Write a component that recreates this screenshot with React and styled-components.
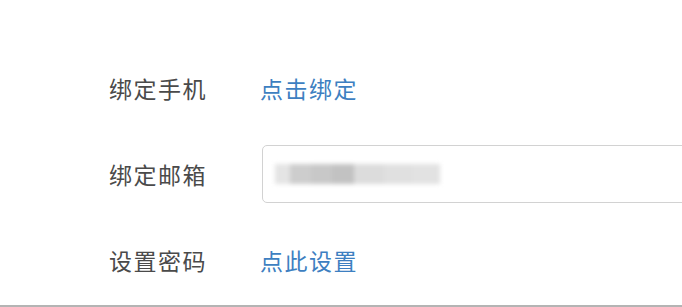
import React from "react";
import styled, { createGlobalStyle } from "styled-components";

const GlobalStyle = createGlobalStyle`
  html, body {
    margin: 0;
    padding: 0;
    background: #fff;
    overflow: hidden;
  }
  body {
    font-family: "Noto Sans CJK SC", "Noto Sans", sans-serif;
  }
`;

const rows = [
  { label: "绑定手机", link: "点击绑定" },
  { label: "绑定邮箱", input: true },
  { label: "设置密码", link: "点此设置" },
];

// pixelated email, blurred out like the screenshot
const blocks = [
  { w: 15, c: "#e4e4e4" },
  { w: 21, c: "#cdcdcd" },
  { w: 21, c: "#c8c8c8" },
  { w: 22, c: "#c2c2c2" },
  { w: 30, c: "#dcdcdc" },
  { w: 28, c: "#e0e0e0" },
  { w: 28, c: "#e2e2e2" },
];

const App = () => {
  return (
    <Page>
      <GlobalStyle />
      {rows.map((r) => (
        <Row key={r.label}>
          <Label>{r.label}</Label>
          {r.input ? (
            <InputBox>
              <Blur>
                {blocks.map((b, i) => (
                  <Pixel key={i} style={{ width: b.w, background: b.c }} />
                ))}
              </Blur>
            </InputBox>
          ) : (
            <Link>{r.link}</Link>
          )}
        </Row>
      ))}
    </Page>
  );
};

export default App;

const Page = styled.div`
  box-sizing: border-box;
  width: 682px;
  height: 307px;
  padding: 59px 0 0 109px;
  display: flex;
  flex-direction: column;
  gap: 28px;
  border-bottom: 2px solid #b4b4b4;
  overflow: hidden;
`;

const Row = styled.div`
  display: flex;
  align-items: center;
  height: 58px;
`;

const Label = styled.div`
  width: 151px;
  flex-shrink: 0;
  font-size: 23px;
  letter-spacing: 1.5px;
  color: #4a4a4a;
`;

const Link = styled.a`
  font-size: 23px;
  letter-spacing: 1.5px;
  color: #3d7fc1;
  cursor: pointer;
`;

const InputBox = styled.div`
  box-sizing: border-box;
  flex-shrink: 0;
  width: 480px;
  height: 58px;
  margin-left: 2px;
  border: 1.5px solid #d2d2d2;
  border-radius: 5px;
  display: flex;
  align-items: center;
  padding-left: 12px;
`;

const Blur = styled.div`
  display: flex;
  height: 20px;
  filter: blur(2px);
`;

const Pixel = styled.span`
  display: block;
  height: 100%;
`;
